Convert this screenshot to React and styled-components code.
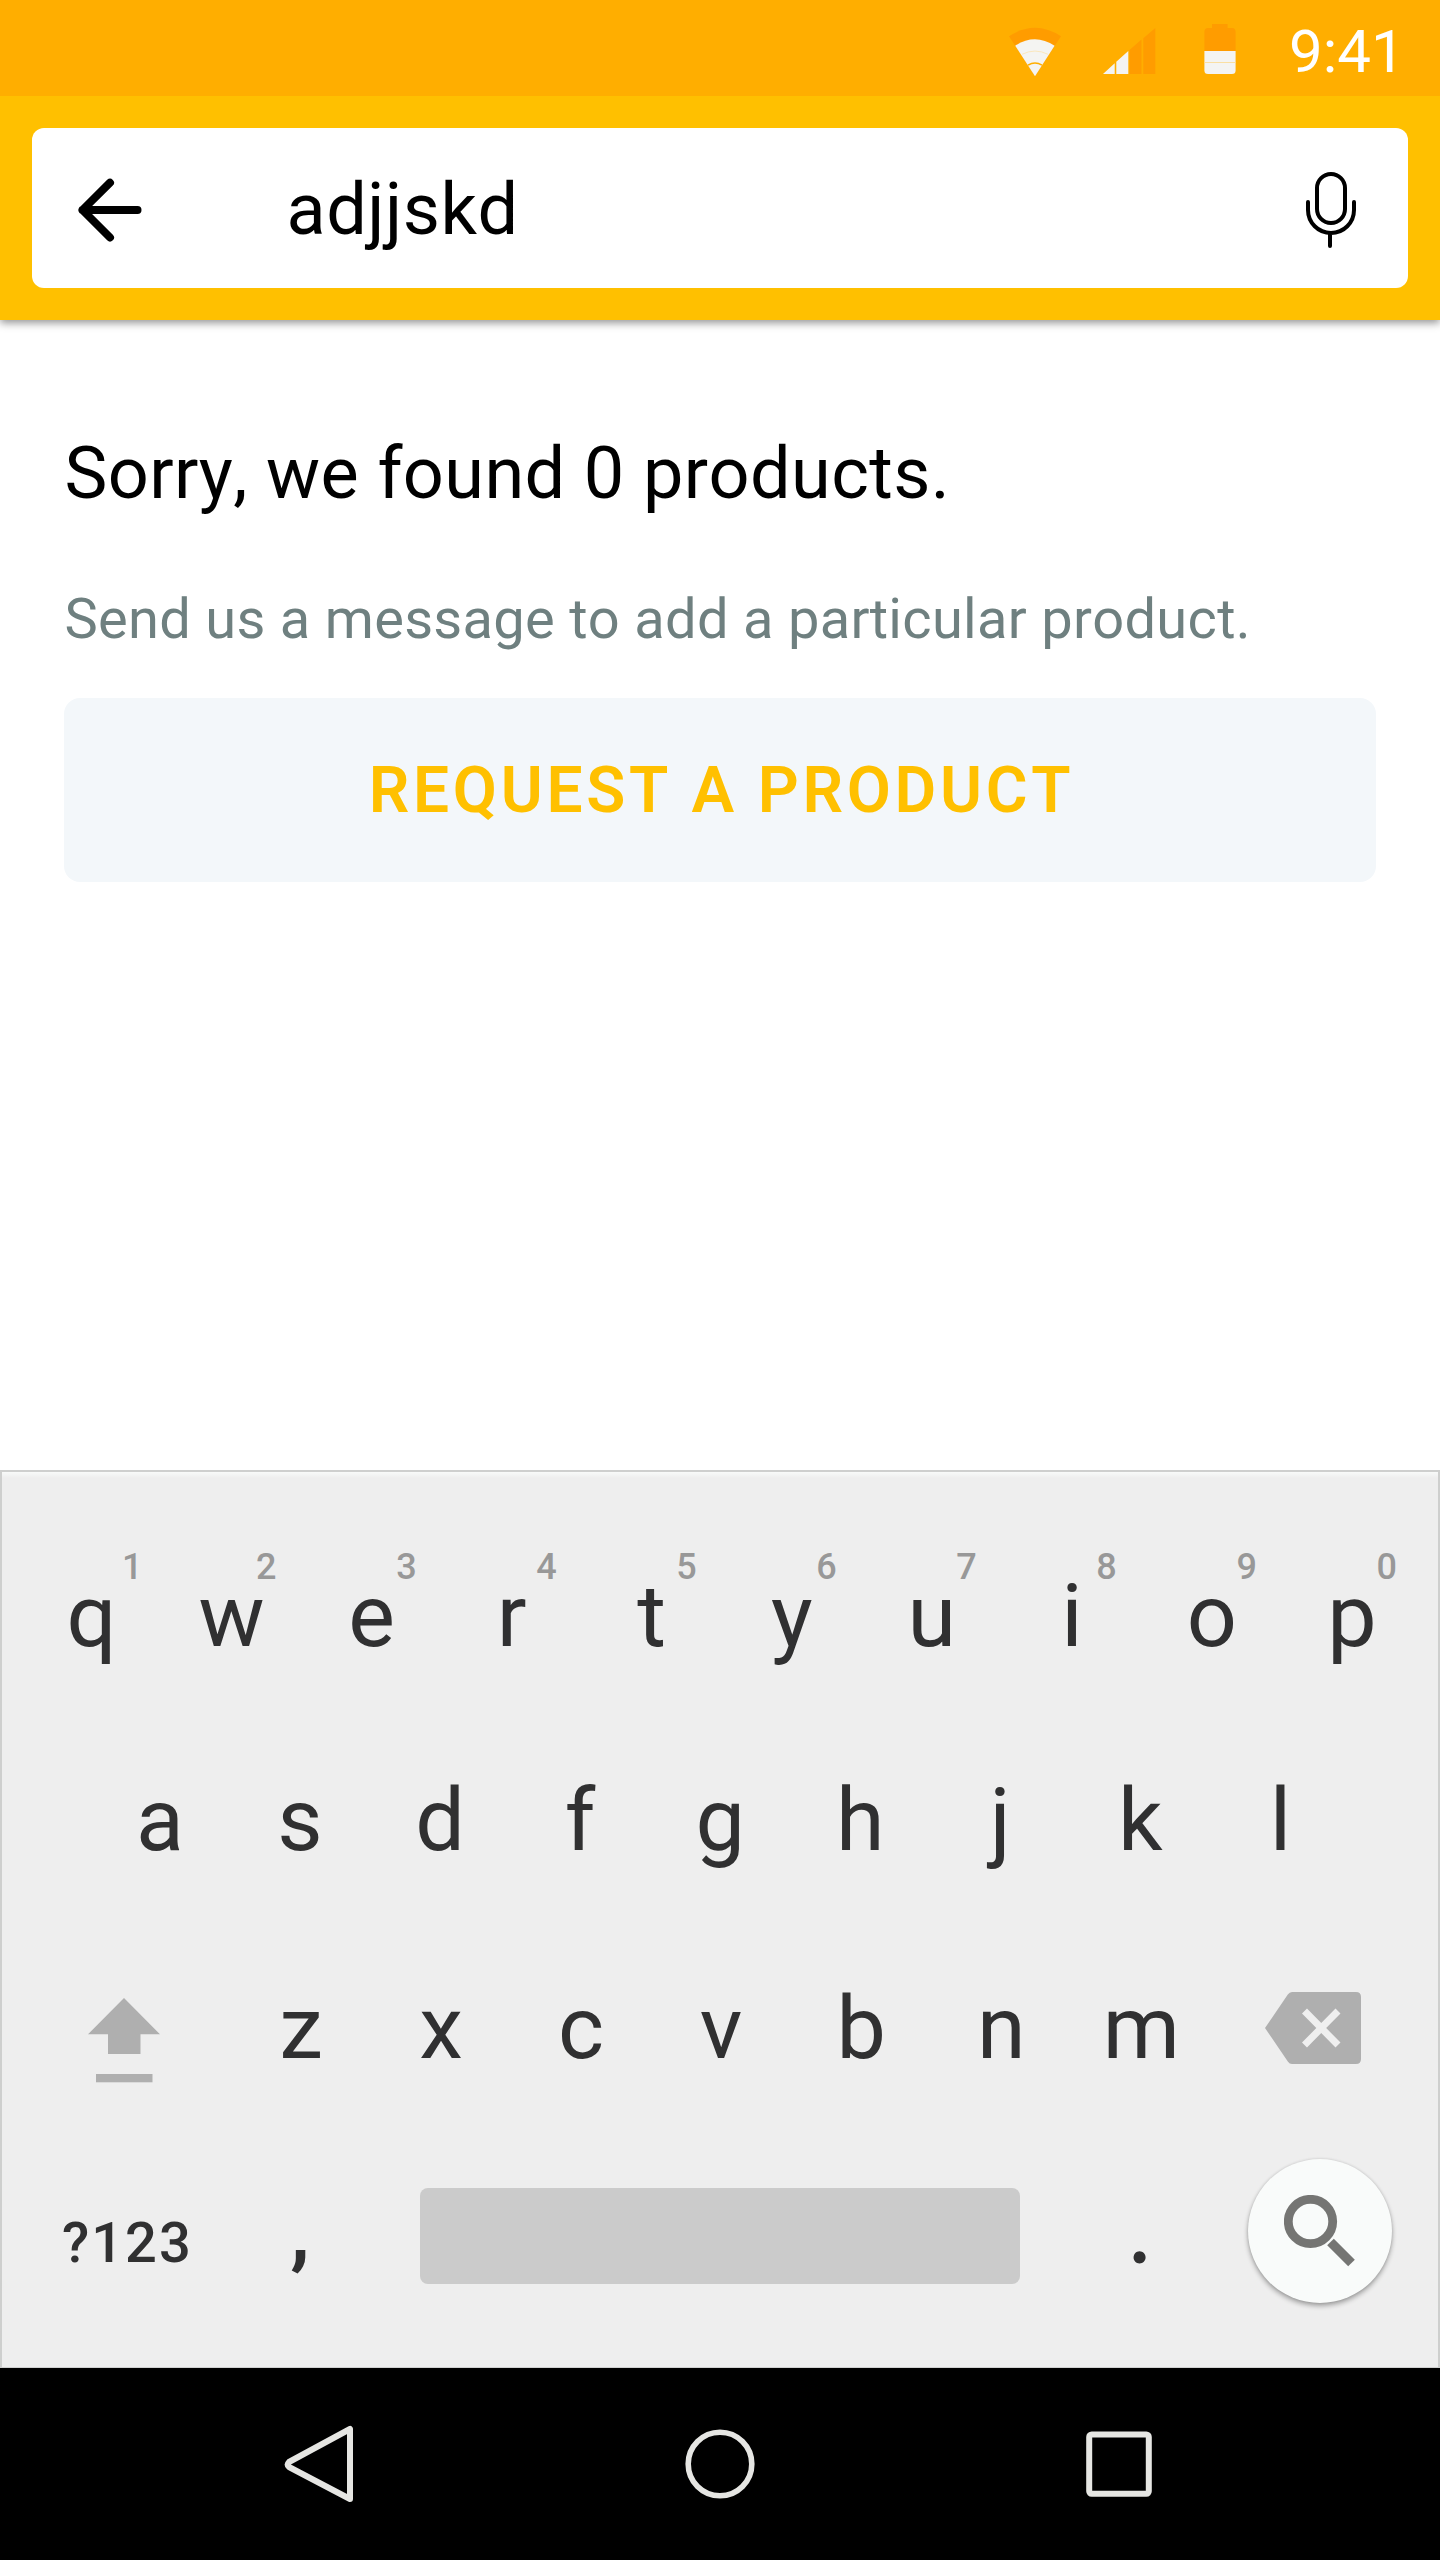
import React from 'react';
import styled, { createGlobalStyle } from 'styled-components';

const GlobalStyle = createGlobalStyle`
  *, *::before, *::after { box-sizing: border-box; }
  html, body { margin: 0; background: #fff; }
  body { font-family: Roboto, "Liberation Sans", sans-serif; font-kerning: none; }
  button { font: inherit; font-kerning: none; color: inherit; border: 0; padding: 0; margin: 0; background: none; }
  svg { display: block; flex: none; }
`;

const Screen = styled.div`
  width: 1440px;
  height: 2560px;
  display: flex;
  flex-direction: column;
  background: #fff;
  overflow: hidden;
`;

const StatusBar = styled.div`
  position: relative;
  z-index: 1;
  height: 96px;
  flex: none;
  display: flex;
  align-items: center;
  justify-content: flex-end;
  background: #ffae00;
`;

const StatusIcons = styled.div`
  display: flex;
  align-items: center;
  height: 96px;
  gap: ${({ $gap }) => $gap}px;
`;

const Clock = styled.time`
  width: 151px;
  margin-left: 53px;
  padding-top: 7px;
  font-size: 60px;
  line-height: 96px;
  color: #fff;
`;

const AppBar = styled.header`
  height: 224px;
  flex: none;
  padding: 32px;
  background: #ffc000;
  box-shadow: 0 3px 8px rgba(0, 0, 0, 0.42);
`;

const SearchBox = styled.div`
  height: 160px;
  display: flex;
  align-items: center;
  padding: 4px 50px 0 46px;
  border-radius: 12px;
  background: #fff;
`;

const IconButton = styled.button`
  display: flex;
  align-items: center;
`;

const Query = styled.div`
  flex: 1;
  margin-left: 144.5px;
  font-size: 72px;
  line-height: 156px;
  letter-spacing: 0.5px;
  color: #000;
`;

const Results = styled.main`
  flex: 1;
  padding: 108px 64px 0;
`;

const Heading = styled.h1`
  margin: 0;
  padding-left: 0.6px;
  font-size: 72px;
  font-weight: 400;
  line-height: 92px;
  letter-spacing: 0.4px;
  color: #000;
`;

const Hint = styled.p`
  margin: 62px 0 0;
  padding-left: 0.4px;
  font-size: 56px;
  line-height: 74px;
  letter-spacing: 0.3px;
  color: #6f8080;
`;

const RequestButton = styled.button`
  display: flex;
  justify-content: center;
  width: 100%;
  height: 184px;
  margin-top: 42px;
  padding: 1px 0 0 3px;
  border-radius: 16px;
  background: #f3f7fa;
  font-size: 64px;
  font-weight: 600;
  line-height: 184px;
  letter-spacing: 3.7px;
  color: #ffc000;
`;

const Keyboard = styled.section`
  height: 898px;
  flex: none;
  display: flex;
  flex-direction: column;
  padding-top: 42px;
  border: 2px solid #cecfce;
  border-bottom: 1px solid #d0d0d0;
  background: linear-gradient(#f8faf9, #eeeeee 6px);
  color: #303031;
`;

const KeyRow = styled.div`
  display: flex;
  align-items: center;
  height: ${({ $height }) => $height}px;
  padding-left: ${({ $inset }) => $inset}px;
`;

const Key = styled.button`
  position: relative;
  width: 140.05px;
  flex: none;
  font-size: 88px;
  line-height: 104px;
  text-align: center;
`;

const Digit = styled.span`
  position: absolute;
  top: -18px;
  left: ${({ $narrow }) => ($narrow ? 76 : 71)}px;
  width: 46px;
  padding-right: ${({ $narrow }) => ($narrow ? 1 : 2)}px;
  font-size: 36px;
  font-weight: 500;
  line-height: 42px;
  text-align: right;
  color: #989898;
`;

const SymbolsKey = styled.button`
  width: 168px;
  flex: none;
  padding-top: 21px;
  font-size: 56px;
  font-weight: 500;
  line-height: 66px;
  letter-spacing: 2px;
  text-align: left;
`;

const CommaKey = styled.button`
  width: 190px;
  flex: none;
  padding-right: 50px;
  font-size: 80px;
  font-weight: 700;
  line-height: 104px;
  text-align: center;
`;

const PeriodKey = styled.button`
  width: 228px;
  flex: none;
  padding: 0 0 12px 11px;
  font-family: Lato, sans-serif;
  font-size: 96px;
  line-height: 104px;
  text-align: center;
`;

const SpaceBar = styled.button`
  width: 600px;
  height: 96px;
  flex: none;
  margin-top: 8px;
  border-radius: 8px;
  background: #cbcbcb;
`;

const SearchKey = styled.button`
  display: flex;
  align-items: center;
  justify-content: center;
  width: 144px;
  height: 144px;
  flex: none;
  margin-bottom: 2px;
  border-radius: 50%;
  background: #f9fbfa;
  box-shadow: 0 3px 5px rgba(0, 0, 0, 0.32), 0 0 3px rgba(0, 0, 0, 0.12);
`;

const ShiftKey = styled.button`
  width: 143px;
  flex: none;
  display: flex;
  padding-top: 26px;
`;

const DeleteKey = styled.button`
  margin-left: 53.5px;
  flex: none;
`;

const NavBar = styled.nav`
  height: 192px;
  flex: none;
  display: flex;
  align-items: center;
  gap: 331.3px;
  padding-left: 283.5px;
  background: #000;
`;

const WifiIcon = () => (
  <svg width="54" height="96" viewBox="0 -27.3 54 96">
    <path d="M1 9 Q27 -8 53 9 L27 49 Z" fill="#ff9c00" />
    <path d="M7.2 18.5 Q27 5.5 46.6 18.5 L27 49 Z" fill="#f4f4f2" />
    <path d="M14 27 Q27 20.5 40 27" fill="none" stroke="#fbe3b0" strokeWidth="0.8" />
    <path d="M20 37.8 Q27 33.4 34 37.8" fill="none" stroke="#ffae00" strokeWidth="1.5" />
  </svg>
);

const SignalIcon = () => (
  <svg width="53" height="96" viewBox="0 -28 53 96">
    <path d="M0 46 L11.7 35.3 V46 Z M13.3 33.8 L25.3 23 V46 H13.3 Z" fill="#f4f4f2" />
    <path d="M26.5 22 L38.5 11.6 V46 H26.5 Z M40.3 10.2 L52.3 0 V46 H40.3 Z" fill="#ff9c00" />
  </svg>
);

const BatteryIcon = () => (
  <svg width="32" height="96" viewBox="0 -24 32 96">
    <path d="M8 0 H23.6 V4 H28 Q31.6 4 31.6 8 V27 H0.4 V8 Q0.4 4 4 4 H8 Z" fill="#ff9c00" />
    <path d="M0.4 27 H31.6 V46.5 Q31.6 50 28 50 H4 Q0.4 50 0.4 46.5 Z" fill="#f4f4f2" />
    <path d="M0.4 38.5 H31.6" stroke="#fbdc98" strokeWidth="0.9" />
  </svg>
);

const BackArrow = () => (
  <svg width="64" height="64" viewBox="0 0 64 64" fill="none" stroke="#000" strokeWidth="8" strokeLinecap="round" strokeLinejoin="round">
    <path d="M59.5 32 H4.5 M32 4.7 L4.5 32 L32 59.5" />
  </svg>
);

const MicIcon = () => (
  <svg width="52" height="78" viewBox="0 0 52 78" fill="none" stroke="#000" strokeWidth="4" strokeLinecap="round">
    <rect x="11" y="3" width="28" height="49" rx="14" />
    <path d="M2 31 V39 A23 23 0 0 0 48 39 V31 M24 62 V75" />
  </svg>
);

const ShiftIcon = () => (
  <svg width="72" height="86" viewBox="0 0 72 86" fill="#afafaf">
    <path d="M36 0 L72 36.3 H52.5 V56 H20 V36.3 H0 Z" />
    <rect x="8" y="76" width="56.5" height="8.3" />
  </svg>
);

const BackspaceIcon = () => (
  <svg width="96" height="72" viewBox="0 0 96 72">
    <path d="M27 0 H91 Q96 0 96 5 V67 Q96 72 91 72 H27 Q24.5 72 22.8 69.5 L0 36 L22.8 2.5 Q24.5 0 27 0 Z" fill="#afafaf" />
    <path d="M39.5 19 L73 53 M73 19 L39.5 53" stroke="#efefef" strokeWidth="7" />
  </svg>
);

const SearchIcon = () => (
  <svg width="72" height="72" viewBox="0 0 72 72" fill="none" stroke="#757573">
    <circle cx="26.5" cy="26.5" r="22.2" strokeWidth="8.8" />
    <path d="M46.5 47 L67.5 68" strokeWidth="9.4" />
  </svg>
);

const NavBack = () => (
  <svg width="70" height="78" viewBox="0 0 70 78" fill="none" stroke="#e6e6e3" strokeWidth="6" strokeLinejoin="round">
    <path d="M66 4 V74 L5 42 Q2.5 39.5 5 37 Z" />
  </svg>
);

const NavHome = () => (
  <svg width="70" height="70" viewBox="0 0 70 70" fill="none" stroke="#e6e6e3" strokeWidth="5.6">
    <circle cx="35" cy="35" r="31.8" />
  </svg>
);

const NavRecents = () => (
  <svg width="66" height="66" viewBox="0 0 66 66" fill="none" stroke="#e6e6e3" strokeWidth="6">
    <rect x="3.2" y="3.4" width="59.6" height="59.4" rx="2.5" />
  </svg>
);

const topRow = [...'qwertyuiop'].map((letter, i) => ({ letter, digit: String((i + 1) % 10) }));

export default function App() {
  return (
    <>
      <GlobalStyle />
      <Screen>
        <StatusBar>
          <StatusIcons $gap={48.5}>
            <StatusIcons $gap={40.4}>
              <WifiIcon />
              <SignalIcon />
            </StatusIcons>
            <BatteryIcon />
          </StatusIcons>
          <Clock>9:41</Clock>
        </StatusBar>
        <AppBar>
          <SearchBox>
            <IconButton aria-label="Back"><BackArrow /></IconButton>
            <Query>adjjskd</Query>
            <IconButton aria-label="Voice search"><MicIcon /></IconButton>
          </SearchBox>
        </AppBar>
        <Results>
          <Heading>Sorry, we found 0 products.</Heading>
          <Hint>Send us a message to add a particular product.</Hint>
          <RequestButton>REQUEST A PRODUCT</RequestButton>
        </Results>
        <Keyboard>
          <KeyRow $height={204} $inset={19.5}>
            {topRow.map(({ letter, digit }) => (
              <Key key={letter}>
                {letter}
                <Digit $narrow={digit === '1'}>{digit}</Digit>
              </Key>
            ))}
          </KeyRow>
          <KeyRow $height={204} $inset={88}>
            {[...'asdfghjkl'].map((letter) => <Key key={letter}>{letter}</Key>)}
          </KeyRow>
          <KeyRow $height={212} $inset={86}>
            <ShiftKey aria-label="Shift"><ShiftIcon /></ShiftKey>
            {[...'zxcvbnm'].map((letter) => <Key key={letter}>{letter}</Key>)}
            <DeleteKey aria-label="Delete"><BackspaceIcon /></DeleteKey>
          </KeyRow>
          <KeyRow $height={196} $inset={60}>
            <SymbolsKey>?123</SymbolsKey>
            <CommaKey>,</CommaKey>
            <SpaceBar aria-label="Space" />
            <PeriodKey>.</PeriodKey>
            <SearchKey aria-label="Search"><SearchIcon /></SearchKey>
          </KeyRow>
        </Keyboard>
        <NavBar>
          <NavBack />
          <NavHome />
          <NavRecents />
        </NavBar>
      </Screen>
    </>
  );
}
